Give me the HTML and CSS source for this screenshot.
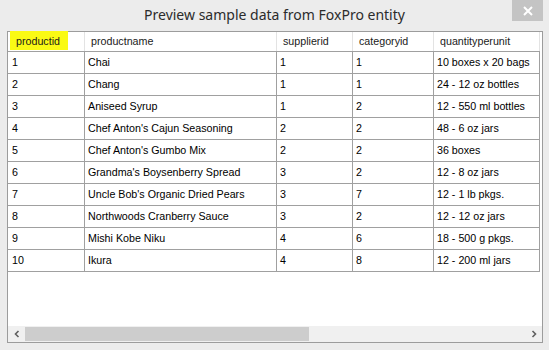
FILE: index.html
```html
<!DOCTYPE html>
<html>
<head>
<meta charset="utf-8">
<link rel="stylesheet" href="styles.css">
</head>
<body>
<div class="window">
  <div class="titlebar">
    <span class="title">Preview sample data from FoxPro entity</span>
    <div class="close"><svg width="12" height="10" viewBox="0 0 12 10"><path d="M2 1 L10 9 M10 1 L2 9" stroke="#fff" stroke-width="2"/></svg></div>
  </div>
  <div class="grid">
    <div class="row head">
      <div class="cell"><span class="mark">productid</span></div>
      <div class="cell">productname</div>
      <div class="cell">supplierid</div>
      <div class="cell">categoryid</div>
      <div class="cell">quantityperunit</div>
    </div>
    <div class="row"><div class="cell">1</div><div class="cell">Chai</div><div class="cell">1</div><div class="cell">1</div><div class="cell">10 boxes x 20 bags</div></div>
    <div class="row"><div class="cell">2</div><div class="cell">Chang</div><div class="cell">1</div><div class="cell">1</div><div class="cell">24 - 12 oz bottles</div></div>
    <div class="row"><div class="cell">3</div><div class="cell">Aniseed Syrup</div><div class="cell">1</div><div class="cell">2</div><div class="cell">12 - 550 ml bottles</div></div>
    <div class="row"><div class="cell">4</div><div class="cell">Chef Anton's Cajun Seasoning</div><div class="cell">2</div><div class="cell">2</div><div class="cell">48 - 6 oz jars</div></div>
    <div class="row"><div class="cell">5</div><div class="cell">Chef Anton's Gumbo Mix</div><div class="cell">2</div><div class="cell">2</div><div class="cell">36 boxes</div></div>
    <div class="row"><div class="cell">6</div><div class="cell">Grandma's Boysenberry Spread</div><div class="cell">3</div><div class="cell">2</div><div class="cell">12 - 8 oz jars</div></div>
    <div class="row"><div class="cell">7</div><div class="cell">Uncle Bob's Organic Dried Pears</div><div class="cell">3</div><div class="cell">7</div><div class="cell">12 - 1 lb pkgs.</div></div>
    <div class="row"><div class="cell">8</div><div class="cell">Northwoods Cranberry Sauce</div><div class="cell">3</div><div class="cell">2</div><div class="cell">12 - 12 oz jars</div></div>
    <div class="row"><div class="cell">9</div><div class="cell">Mishi Kobe Niku</div><div class="cell">4</div><div class="cell">6</div><div class="cell">18 - 500 g pkgs.</div></div>
    <div class="row"><div class="cell">10</div><div class="cell">Ikura</div><div class="cell">4</div><div class="cell">8</div><div class="cell">12 - 200 ml jars</div></div>
    <div class="spacer"></div>
    <div class="hscroll">
      <div class="arrow"><svg width="8" height="8" viewBox="0 0 8 8"><path d="M5.5 1 L2.5 4 L5.5 7" fill="none" stroke="#606060" stroke-width="1.6"/></svg></div>
      <div class="track"><div class="thumb"></div></div>
      <div class="arrow"><svg width="8" height="8" viewBox="0 0 8 8"><path d="M2.5 1 L5.5 4 L2.5 7" fill="none" stroke="#606060" stroke-width="1.6"/></svg></div>
    </div>
  </div>
</div>
</body>
</html>
```

FILE: styles.css
```css
html, body {
  margin: 0;
  padding: 0;
}
body {
  background: #ececec;
  font-family: "Liberation Sans", Arial, sans-serif;
  width: 549px;
  height: 350px;
  overflow: hidden;
}
.window {
  display: flex;
  flex-direction: column;
  height: 350px;
}
.titlebar {
  position: relative;
  height: 31px;
  display: flex;
  align-items: center;
  justify-content: center;
}
.title {
  font-family: "Noto Sans", "Open Sans", sans-serif;
  font-size: 14px;
  color: #2b2b2b;
  padding-bottom: 1px;
}
.close {
  position: absolute;
  left: 512px;
  top: 0;
  width: 31px;
  height: 21px;
  background: #c4c4c4;
  display: flex;
  align-items: center;
  justify-content: center;
}
.grid {
  margin: 0 0 7px 7px;
  width: 536px;
  height: 313px;
  box-sizing: border-box;
  border: 1px solid #9c9c9c;
  background: #fff;
  display: flex;
  flex-direction: column;
}
.row {
  display: grid;
  grid-template-columns: 77px 192px 76px 81px 106px;
  height: 22px;
  box-sizing: border-box;
  border-bottom: 1px solid #a0a0a0;
  width: 532px;
}
.cell {
  border-right: 1px solid #a0a0a0;
  font-size: 10.7px;
  line-height: 21px;
  padding-left: 3px;
  color: #000;
  white-space: nowrap;
  overflow: hidden;
}
.row .cell:first-child {
  padding-left: 4px;
}
.row.head {
  height: 20px;
}
.head .cell {
  border-right-color: #e3e3e3;
  line-height: 19px;
  padding-left: 6px;
  color: #1a1a1a;
  overflow: visible;
}
.head .cell:first-child {
  padding-left: 2px;
}
.mark {
  background: #fafa14;
  padding: 4px 8px 3px 6px;
}
.spacer {
  flex: 1;
}
.hscroll {
  height: 16px;
  display: flex;
  background: #f0f0f0;
}
.arrow {
  width: 17px;
  display: flex;
  align-items: center;
  justify-content: center;
}
.track {
  flex: 1;
  display: flex;
  padding: 1px 0;
}
.thumb {
  width: 284px;
  background: #cdcdcd;
}
```
